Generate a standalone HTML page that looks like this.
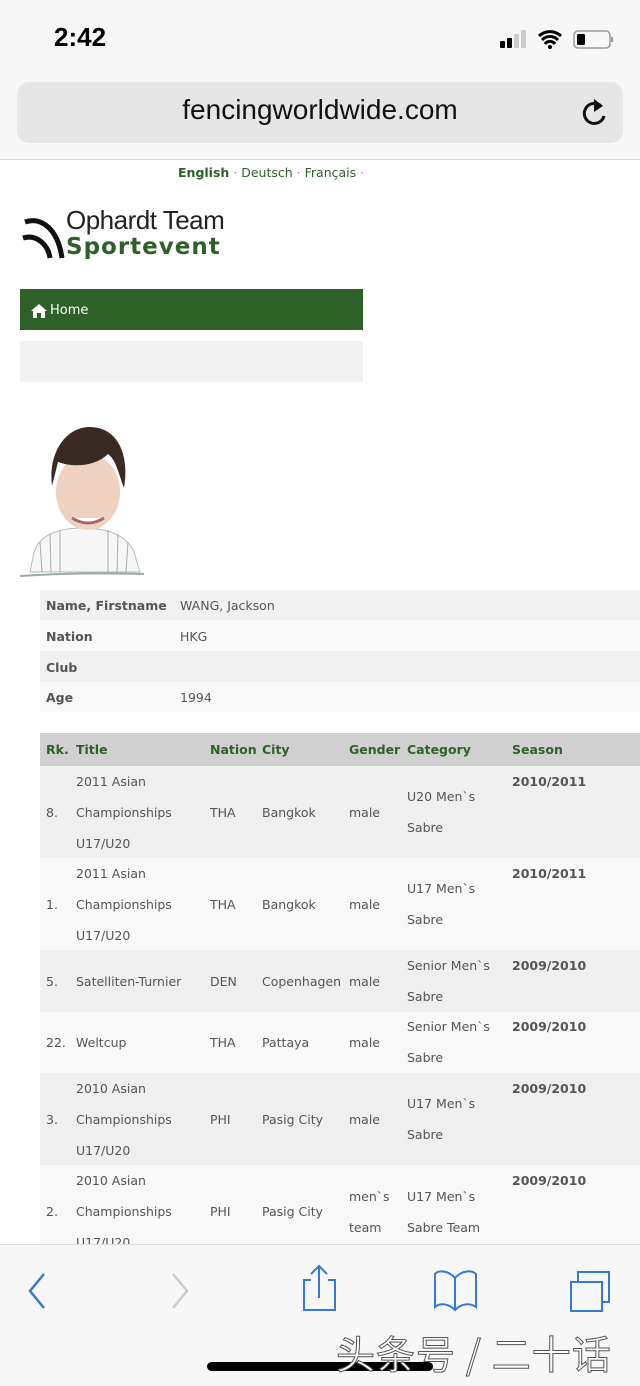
<!DOCTYPE html>
<html><head><meta charset="utf-8"><style>
*{margin:0;padding:0;box-sizing:border-box}
body{width:640px;height:1386px;position:relative;overflow:hidden;background:#fff;font-family:"DejaVu Sans",Verdana,sans-serif;color:#555}
.a{position:absolute}
.t{font-size:12.5px;color:#555;white-space:nowrap}
.h{font-size:12.5px;font-weight:bold;color:#2e6128;white-space:nowrap}
.b{font-weight:bold;color:#555}
</style></head><body>
<div class="a" style="left:0;top:0;width:640px;height:160px;background:#f7f7f7;border-bottom:1px solid #ddd"></div>
<div class="a" style="left:54px;top:22px;font:600 26px 'Liberation Sans',sans-serif;color:#000">2:42</div>
<svg class="a" style="left:498px;top:28px" width="120" height="24" viewBox="0 0 120 24">
<rect x="2" y="13" width="5" height="7" rx="1" fill="#000"/><rect x="9" y="10" width="5" height="10" rx="1" fill="#000"/><rect x="16" y="6" width="5" height="14" rx="1" fill="#ccc"/><rect x="23" y="2" width="5" height="18" rx="1" fill="#ccc"/>
<path d="M41 8a16 16 0 0 1 22 0M44 12a11 11 0 0 1 16 0M47 16a6 6 0 0 1 10 0" stroke="#000" stroke-width="3" fill="none"/><circle cx="52" cy="19" r="2" fill="#000"/>
<rect x="76" y="3" width="36" height="17" rx="4" fill="none" stroke="#999" stroke-width="1.5"/><rect x="79" y="6" width="8" height="11" rx="1.5" fill="#000"/><rect x="113" y="9" width="2" height="5" fill="#999"/>
</svg>
<div class="a" style="left:17px;top:82px;width:606px;height:61px;background:#e6e6e6;border-radius:12px"></div>
<div class="a" style="left:0;top:94px;width:640px;text-align:center;font:28px 'Liberation Sans',sans-serif;color:#111">fencingworldwide.com</div>
<svg class="a" style="left:580px;top:96px" width="30" height="34" viewBox="0 0 30 34"><path d="M21 10A10 10 0 1 0 24 20" stroke="#111" stroke-width="3" fill="none"/><path d="M14 3L23 10L14 16z" fill="#111"/></svg>

<div class="a t" style="left:178px;top:165px;font-size:12.5px;color:#2e6128"><b>English</b> <span style="color:#888">·</span> Deutsch <span style="color:#888">·</span> Français <span style="color:#888">·</span></div>
<svg class="a" style="left:22px;top:212px" width="44" height="50" viewBox="0 0 44 50"><path d="M3 10C20 4 36 18 40 46" stroke="#111" stroke-width="5" fill="none"/><path d="M1 26C14 22 26 32 28 46" stroke="#111" stroke-width="5" fill="none"/></svg>
<div class="a" style="left:66px;top:205px;font:26px 'Liberation Sans',sans-serif;color:#222;letter-spacing:-0.5px">Ophardt Team</div>
<div class="a" style="left:66px;top:234px;font:bold 23px 'DejaVu Sans',sans-serif;color:#2e6128;letter-spacing:1px">Sportevent</div>

<div class="a" style="left:20px;top:289px;width:343px;height:41px;background:#2e6128"></div>
<svg class="a" style="left:31px;top:304px" width="16" height="14" viewBox="0 0 16 14"><path d="M8 0L0 7h2v7h4V9h4v5h4V7h2z" fill="#fff"/></svg>
<div class="a" style="left:50px;top:303px;font-size:13px;color:#fff">Home</div>
<div class="a" style="left:20px;top:341px;width:343px;height:41px;background:#f1f1f1"></div>

<svg class="a" style="left:20px;top:422px" width="128" height="160" viewBox="0 0 128 160">
<path d="M14 130C20 112 40 106 62 106C86 106 106 112 114 130L120 150H10z" fill="#f6f6f6" stroke="#bbb"/>
<path d="M20 120l2 30M30 112l1 38M40 108v42M88 108v42M98 112l-1 38M108 120l-2 30" stroke="#aaa"/>
<ellipse cx="68" cy="70" rx="32" ry="38" fill="#f0d2c0"/>
<path d="M32 64C28 30 46 5 70 5C96 5 110 30 104 66C98 50 96 38 88 32C76 44 54 46 38 40C36 48 34 56 32 64z" fill="#3a2a24"/>
<path d="M52 96Q68 106 84 96" stroke="#a66" stroke-width="3" fill="#fff"/>
<path d="M0 154Q60 150 124 152" stroke="#9aa" stroke-width="2" fill="none"/>
</svg>

<div class="a" style="left:40px;top:590px;width:600px;height:30px;background:#f1f1f1"></div>
<div class="a" style="left:40px;top:620px;width:600px;height:31px;background:#f9f9f9"></div>
<div class="a" style="left:40px;top:651px;width:600px;height:31px;background:#f1f1f1"></div>
<div class="a" style="left:40px;top:682px;width:600px;height:30px;background:#f9f9f9"></div>
<div class="a t b" style="left:46px;top:598px">Name, Firstname</div><div class="a t" style="left:180px;top:598px">WANG, Jackson</div>
<div class="a t b" style="left:46px;top:629px">Nation</div><div class="a t" style="left:180px;top:629px">HKG</div>
<div class="a t b" style="left:46px;top:660px">Club</div>
<div class="a t b" style="left:46px;top:690px">Age</div><div class="a t" style="left:180px;top:690px">1994</div>

<div class="a" style="left:40px;top:733px;width:600px;height:33px;background:#d0d0d0"></div>
<div class="a" style="left:40px;top:766px;width:600px;height:92px;background:#efefef"></div>
<div class="a" style="left:40px;top:858px;width:600px;height:92px;background:#f8f8f8"></div>
<div class="a" style="left:40px;top:950px;width:600px;height:62px;background:#efefef"></div>
<div class="a" style="left:40px;top:1012px;width:600px;height:61px;background:#f8f8f8"></div>
<div class="a" style="left:40px;top:1073px;width:600px;height:92px;background:#efefef"></div>
<div class="a" style="left:40px;top:1165px;width:600px;height:80px;background:#f8f8f8"></div>

<div class="a h" style="left:46px;top:742px">Rk.</div><div class="a h" style="left:76px;top:742px">Title</div><div class="a h" style="left:210px;top:742px">Nation</div><div class="a h" style="left:262px;top:742px">City</div><div class="a h" style="left:349px;top:742px">Gender</div><div class="a h" style="left:407px;top:742px">Category</div><div class="a h" style="left:512px;top:742px">Season</div>

<div class="a t" style="left:76px;top:766px;line-height:31px">2011 Asian<br>Championships<br>U17/U20</div>
<div class="a t" style="left:46px;top:805px">8.</div><div class="a t" style="left:210px;top:805px">THA</div><div class="a t" style="left:262px;top:805px">Bangkok</div><div class="a t" style="left:349px;top:805px">male</div>
<div class="a t" style="left:407px;top:781px;line-height:31px">U20 Men`s<br>Sabre</div><div class="a t b" style="left:512px;top:774px">2010/2011</div>

<div class="a t" style="left:76px;top:858px;line-height:31px">2011 Asian<br>Championships<br>U17/U20</div>
<div class="a t" style="left:46px;top:897px">1.</div><div class="a t" style="left:210px;top:897px">THA</div><div class="a t" style="left:262px;top:897px">Bangkok</div><div class="a t" style="left:349px;top:897px">male</div>
<div class="a t" style="left:407px;top:873px;line-height:31px">U17 Men`s<br>Sabre</div><div class="a t b" style="left:512px;top:866px">2010/2011</div>

<div class="a t" style="left:46px;top:974px">5.</div><div class="a t" style="left:76px;top:974px">Satelliten-Turnier</div><div class="a t" style="left:210px;top:974px">DEN</div><div class="a t" style="left:262px;top:974px">Copenhagen</div><div class="a t" style="left:349px;top:974px">male</div>
<div class="a t" style="left:407px;top:950px;line-height:31px">Senior Men`s<br>Sabre</div><div class="a t b" style="left:512px;top:958px">2009/2010</div>

<div class="a t" style="left:46px;top:1035px">22.</div><div class="a t" style="left:76px;top:1035px">Weltcup</div><div class="a t" style="left:210px;top:1035px">THA</div><div class="a t" style="left:262px;top:1035px">Pattaya</div><div class="a t" style="left:349px;top:1035px">male</div>
<div class="a t" style="left:407px;top:1011px;line-height:31px">Senior Men`s<br>Sabre</div><div class="a t b" style="left:512px;top:1019px">2009/2010</div>

<div class="a t" style="left:76px;top:1073px;line-height:31px">2010 Asian<br>Championships<br>U17/U20</div>
<div class="a t" style="left:46px;top:1112px">3.</div><div class="a t" style="left:210px;top:1112px">PHI</div><div class="a t" style="left:262px;top:1112px">Pasig City</div><div class="a t" style="left:349px;top:1112px">male</div>
<div class="a t" style="left:407px;top:1088px;line-height:31px">U17 Men`s<br>Sabre</div><div class="a t b" style="left:512px;top:1081px">2009/2010</div>

<div class="a t" style="left:76px;top:1165px;line-height:31px">2010 Asian<br>Championships<br>U17/U20</div>
<div class="a t" style="left:46px;top:1204px">2.</div><div class="a t" style="left:210px;top:1204px">PHI</div><div class="a t" style="left:262px;top:1204px">Pasig City</div>
<div class="a t" style="left:349px;top:1181px;line-height:31px">men`s<br>team</div>
<div class="a t" style="left:407px;top:1181px;line-height:31px">U17 Men`s<br>Sabre Team</div><div class="a t b" style="left:512px;top:1173px">2009/2010</div>

<div class="a" style="left:0;top:1244px;width:640px;height:142px;background:#f7f7f7;border-top:1px solid #ddd"></div>
<svg class="a" style="left:0;top:1260px" width="640" height="70" viewBox="0 0 640 70">
<path d="M44 14L30 31L44 48" stroke="#3478d8" stroke-width="2.5" fill="none"/>
<path d="M173 14L187 31L173 48" stroke="#ccc" stroke-width="2.5" fill="none"/>
<path d="M311 20H304V50H335V20H328M319 38V6M311 14L319 6L327 14" stroke="#3478d8" stroke-width="2" fill="none"/>
<path d="M455 50V18C448 10 438 10 435 14V47C440 43 448 43 455 50C462 43 470 43 476 47V14C472 10 462 10 455 18" stroke="#3478d8" stroke-width="2" fill="none"/>
<path d="M571 22H602V51H571zM578 22V12H609V42H602" stroke="#3478d8" stroke-width="2" fill="none"/>
</svg>
<div class="a" style="left:207px;top:1362px;width:226px;height:9px;background:#000;border-radius:5px"></div>
<div class="a" style="left:336px;top:1325px;font:39px 'Noto Sans CJK SC',sans-serif;color:#fff;-webkit-text-stroke:1px #555;white-space:nowrap;letter-spacing:1px">头条号 / 二十话</div>
</body></html>
